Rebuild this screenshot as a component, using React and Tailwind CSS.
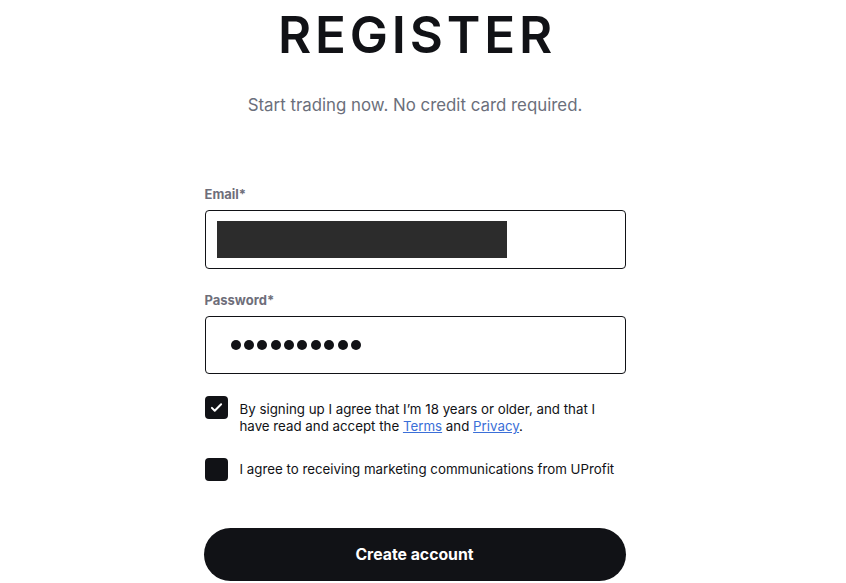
export default function App() {
  return (
    <div className="min-h-screen bg-white font-['Inter',sans-serif] text-[#111216]">
      <div className="flex w-[830px] flex-col items-center pt-[5px]">
        <h1 className="pl-[4px] text-[51px] font-semibold leading-[60px] tracking-[0.075em]">REGISTER</h1>
        <p className="mt-[28px] text-[16.85px] leading-6 text-[#6b6f7b]">
          Start trading now. No credit card required.
        </p>

        <form className="mt-[69px] flex w-[421px] flex-col">
          <label className="text-[13px] font-bold leading-4 text-[#6e6e7a]">Email*</label>
          <div className="mt-[8px] flex h-[59px] items-center rounded-[4px] border border-[#111216] px-[11px]">
            <div className="h-[37px] w-[290px] bg-[#2c2c2c]" />
          </div>

          <label className="mt-[23px] text-[13px] font-bold leading-4 text-[#6e6e7a]">Password*</label>
          <div className="mt-[8px] flex h-[58px] items-center gap-[3.4px] rounded-[4px] border border-[#111216] px-[25px]">
            {Array.from({ length: 10 }).map((_, i) => (
              <span key={i} className="h-[10px] w-[10px] rounded-full bg-[#111216]" />
            ))}
          </div>

          <div className="mt-[22px] flex items-start gap-[12px]">
            <div className="flex h-[23px] w-[23px] shrink-0 items-center justify-center rounded-[4px] bg-[#111216]">
              <svg viewBox="0 0 24 24" className="h-[17px] w-[17px]" fill="none" stroke="white" strokeWidth="2.8" strokeLinecap="round" strokeLinejoin="round">
                <path d="M5.5 12.5l4 4L18.5 7.5" />
              </svg>
            </div>
            <p className="mt-[5px] text-[13.3px] leading-[17px]">
              By signing up I agree that I’m 18 years or older, and that I<br />
              have read and accept the{' '}
              <a href="#" className="text-[#3b6fd8] underline">Terms</a> and{' '}
              <a href="#" className="text-[#3b6fd8] underline">Privacy</a>.
            </p>
          </div>

          <div className="mt-[23px] flex items-center gap-[12px]">
            <div className="h-[23px] w-[23px] shrink-0 rounded-[4px] bg-[#111216]" />
            <p className="whitespace-nowrap text-[13.3px] leading-[17px]">I agree to receiving marketing communications from UProfit</p>
          </div>

          <button
            type="button"
            className="mt-[47px] h-[53px] w-[422px] -ml-px rounded-full bg-[#111216] text-[15.8px] font-bold text-white"
          >
            Create account
          </button>
        </form>
      </div>
    </div>
  )
}
